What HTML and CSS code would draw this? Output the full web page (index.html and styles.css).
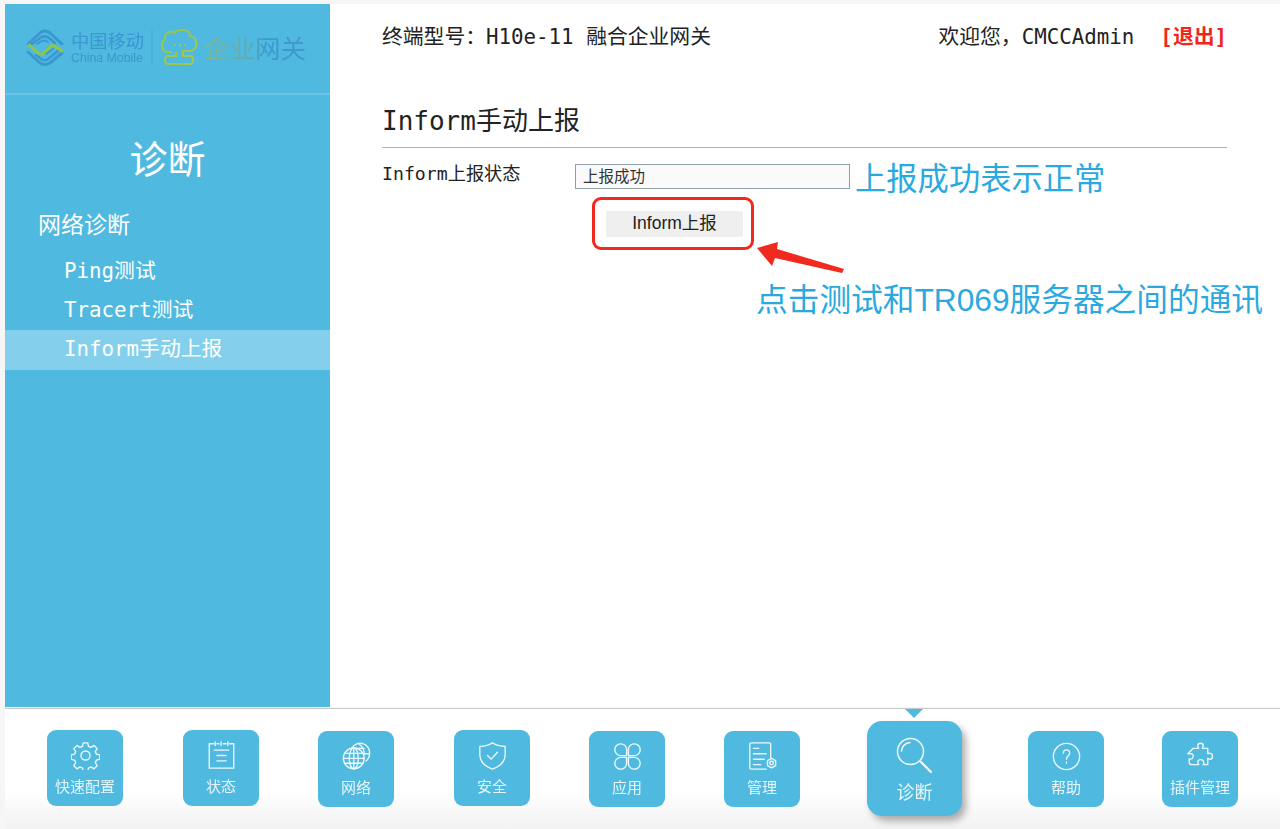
FILE: index.html
```html
<!DOCTYPE html>
<html lang="zh-CN">
<head>
<meta charset="utf-8">
<title>Inform手动上报</title>
<link rel="stylesheet" href="styles.css">
</head>
<body>
<div class="frame">
  <div class="upper">
    <aside class="sidebar">
      <div class="logo-row">
        <svg class="logo" width="325" height="91" viewBox="5 4 325 91">
          <defs>
            <linearGradient id="gw" x1="204" y1="0" x2="306" y2="0" gradientUnits="userSpaceOnUse">
              <stop offset="0" stop-color="#7dbb8c"/>
              <stop offset=".45" stop-color="#5fa9b4"/>
              <stop offset=".6" stop-color="#3f98d0"/>
              <stop offset="1" stop-color="#3f98d0"/>
            </linearGradient>
            <linearGradient id="cloud" x1="162" y1="30" x2="198" y2="65" gradientUnits="userSpaceOnUse">
              <stop offset="0" stop-color="#8dc45a"/>
              <stop offset="1" stop-color="#a8c843"/>
            </linearGradient>
          </defs>
          <g fill="none" stroke="#3a97d0" stroke-linecap="round" stroke-linejoin="round">
            <path d="M28 44 L40 33 Q45 29 50 33 L62 44" stroke-width="3"/>
            <path d="M32 44 L41 37.500 Q45 35 49 38 L55 43" stroke-width="2.500"/>
            <path d="M37 44 L42 41 Q45 39.500 48 42" stroke-width="2"/>
            <path d="M28 52 L40 63 Q45 66 50 63 L62 53" stroke-width="3"/>
            <path d="M36 55 L42 59.500 Q45 61 48 59 L58 51" stroke-width="2.500"/>
            <path d="M46 54 L53 49" stroke-width="2"/>
          </g>
          <path d="M29 45 L38 53 Q41 55.500 44 53 L50 47 Q53 44 56 47 L62 51" fill="none" stroke="#8fc549" stroke-width="3" stroke-linecap="round"/>
          <text class="logo-cn" x="71" y="47.500">中国移动</text>
          <text class="logo-en" x="71" y="61.500">China Mobile</text>
          <path d="M152 30 V65" stroke="#45a6d6" stroke-width="1"/>
          <path d="M172 52 H168 C161 52 160 42 165 40 C163 33 172 30 175 33 C178 28 190 29 190 36 C198 36 199 50 190 51 H183 V56 H190 C194 56 194 64 190 64 H168 C164 64 164 56 168 56 H176 V52" fill="none" stroke="url(#cloud)" stroke-width="2.200"/>
          <g fill="#a8c843"><circle cx="175" cy="45" r="1"/><circle cx="180" cy="45" r="1"/><circle cx="185" cy="45" r="1"/></g>
          <text class="logo-gw" x="204" y="58" fill="url(#gw)">企业网关</text>
        </svg>
      </div>
      <h1 class="side-title">诊断</h1>
      <nav class="side-nav">
        <div class="side-group">网络诊断</div>
        <a class="side-item">Ping测试</a>
        <a class="side-item">Tracert测试</a>
        <a class="side-item active">Inform手动上报</a>
      </nav>
    </aside>
    <main class="content">
      <header class="topbar">
        <div class="model">终端型号：H10e-11 融合企业网关</div>
        <div class="user"><span>欢迎您，CMCCAdmin</span><a class="logout">[退出]</a></div>
      </header>
      <h2 class="page-title">Inform手动上报</h2>
      <div class="form-row">
        <label class="form-label">Inform上报状态</label>
        <div class="status-box">上报成功</div>
      </div>
      <div class="button-row"><button class="inform-btn">Inform上报</button></div>
    </main>
  </div>
  <footer class="dock">
    <div class="dock-item up"><div class="tile">
      <svg class="ico" viewBox="0 0 32 32"><path d="M13.500 2h5l.8 3.800 2.900 1.200 3.200-2.100 3.500 3.500-2.100 3.200 1.200 2.900 3.800.8v5l-3.800.8-1.200 2.900 2.100 3.200-3.500 3.500-3.200-2.100-2.900 1.200-.8 3.800h-5l-.8-3.800-2.900-1.200-3.200 2.100-3.500-3.500 2.100-3.200-1.200-2.900-3.800-.8v-5l3.800-.8 1.200-2.900-2.100-3.200 3.500-3.500 3.200 2.100 2.900-1.200z"/><circle cx="16" cy="16" r="5"/></svg>
      <span class="lbl">快速配置</span></div></div>
    <div class="dock-item up"><div class="tile">
      <svg class="ico" viewBox="0 0 32 32"><path d="M7 3H2.500v27h27V3H25"/><path d="M11 3h2M18 3h3M9 1v4M15.500 1v4M23 1v4M8 10h16M11 16h10M11 22h10"/></svg>
      <span class="lbl">状态</span></div></div>
    <div class="dock-item"><div class="tile">
      <svg class="ico" viewBox="0 0 32 32"><circle cx="13" cy="18" r="11.500"/><ellipse cx="13" cy="18" rx="5" ry="11.500"/><path d="M13 6.500v23M1.500 18h23M3 12.500h20M3 23.500h20"/><path d="M11 6.500a10.500 10.500 0 0 1 19.500 6c0 3.500-1.500 6.500-4 8.500M19 2.500c3 2 5.500 6 5.500 11M24.500 7H14M30 13h-5.500"/></svg>
      <span class="lbl">网络</span></div></div>
    <div class="dock-item up"><div class="tile">
      <svg class="ico" viewBox="0 0 32 32"><path d="M16 2c4 3 9 4 14 4v9c0 8-6 13-14 16C8 28 2 23 2 15V6c5 0 10-1 14-4z"/><path d="M10.500 16l4 4 7-7.500"/></svg>
      <span class="lbl">安全</span></div></div>
    <div class="dock-item"><div class="tile">
      <svg class="ico" viewBox="0 0 32 32"><path d="M15 15H8a6.500 6.500 0 1 1 7-7zM17 15h7a6.500 6.500 0 1 0-7-7zM15 17H8a6.500 6.500 0 1 0 7 7zM17 17h7a6.500 6.500 0 1 1-7 7z"/></svg>
      <span class="lbl">应用</span></div></div>
    <div class="dock-item"><div class="tile">
      <svg class="ico" viewBox="0 0 32 32"><path d="M20 30H3.500a1.500 1.500 0 0 1-1.500-1.500v-26A1.500 1.500 0 0 1 3.500 1h20A1.500 1.500 0 0 1 25 2.500V17"/><path d="M6 7h6M6 13h14M6 19h12M6 25h8"/><path d="M26 18l4.500 2.500v5.500L26 28.500 21.500 26v-5.500z"/><circle cx="26" cy="23.300" r="2"/></svg>
      <span class="lbl">管理</span></div></div>
    <div class="dock-item current"><div class="tile">
      <svg class="ico" viewBox="0 0 36 36"><circle cx="14.500" cy="14.500" r="13"/><path d="M5.500 14a9 9 0 0 1 8.500-8.500"/><path d="M24.500 24.500L35 35" stroke-width="2.200"/></svg>
      <span class="lbl">诊断</span></div></div>
    <div class="dock-item"><div class="tile">
      <svg class="ico" viewBox="0 0 32 32"><circle cx="16" cy="16" r="14.500"/><path d="M12.500 12.500c0-5 7-5 7 0 0 3-3.500 3-3.500 6.500M16 22v1.500"/></svg>
      <span class="lbl">帮助</span></div></div>
    <div class="dock-item"><div class="tile">
      <svg class="ico" viewBox="0 0 32 32"><path d="M13 4c0-3.500 6-3.500 6 0 0 1-.5 2-1 3h6v6c1-.5 2-1 3-.5 3 .5 3 6 0 6.500-1 0-2-.5-3-1v7h-5c.5-1 1-2 .5-3-.5-3.500-6-3.500-6.500 0 0 1 .5 2 1 3H6.500c-2 0-3-1-3-3v-3.500c1 .5 2 .5 3 0 2-2 2-4 0-5.500H2L8 7h6c-.5-1-1-2-1-3z"/></svg>
      <span class="lbl">插件管理</span></div></div>
  </footer>
  <div class="note note-ok">上报成功表示正常</div>
  <div class="note note-tr">点击测试和TR069服务器之间的通讯</div>
  <div class="callout"></div>
  <svg class="arrow" width="92" height="40" viewBox="0 0 92 40"><path d="M0 6L21 0 20 7 87 27 85 31 18 16 15 24z" fill="#f12a20"/></svg>
</div>
</body>
</html>
```

FILE: styles.css
```css
* { box-sizing: border-box; }
html, body { margin: 0; height: 100%; overflow: hidden; }
body {
  background: #f6f6f6;
  font-family: "DejaVu Sans Mono", "Noto Sans CJK SC", monospace;
  color: #222;
}
.frame {
  position: relative;
  width: 1280px;
  height: 829px;
  padding: 4px 0 0 5px;
  display: flex;
  flex-direction: column;
}
.upper {
  display: flex;
  height: 703px;
  background: #fff;
}
.sidebar {
  width: 325px;
  flex: none;
  background: #50b9e0;
  color: #fff;
}
.logo-row {
  height: 91px;
  border-bottom: 2px solid #6cc5e6;
}
.logo { display: block; filter: blur(.5px); }
.logo-cn { font: 18.250px "Noto Sans CJK SC", sans-serif; fill: #3a97d0; }
.logo-en { font: 12.300px "Liberation Sans", sans-serif; fill: #3a97d0; }
.logo-gw { font: 25.500px "Noto Sans CJK SC", sans-serif; }
.side-title {
  margin: 0;
  padding-top: 34px;
  height: 104px;
  text-align: center;
  font: 400 38px/56px "Noto Sans CJK SC", sans-serif;
}
.side-nav { display: flex; flex-direction: column; }
.side-group {
  height: 53px;
  padding-left: 33px;
  font-size: 23px;
  line-height: 52px;
}
.side-item {
  height: 39px;
  padding-left: 59px;
  font-size: 20.800px;
  line-height: 39px;
  white-space: nowrap;
}
.side-item.active { background: #84d0ec; height: 40px; }
.content {
  flex: 1;
  padding: 0 53px 0 52px;
  min-width: 0;
}
.topbar {
  height: 64px;
  padding-top: 1px;
  display: flex;
  justify-content: space-between;
  font-size: 20.800px;
  line-height: 64px;
  white-space: nowrap;
}
.user { display: flex; gap: 26px; }
.logout { color: #f0261d; font-weight: 700; }
.page-title {
  margin: 0;
  height: 80px;
  padding-top: 34px;
  border-bottom: 1px solid #b4b4b4;
  font-size: 26px;
  font-weight: 400;
  line-height: 38px;
}
.form-row {
  display: flex;
  align-items: flex-start;
  margin-top: 16px;
}
.form-label {
  width: 193px;
  font-size: 18.200px;
  line-height: 20px;
}
.status-box {
  width: 275px;
  height: 25px;
  border: 1px solid #8fa0a8;
  background: #fafafa;
  padding-left: 7px;
  font: 15.500px/20px "Noto Sans CJK SC", sans-serif;
  color: #333;
}
.button-row { padding: 22px 0 0 224px; }
.inform-btn {
  width: 137px;
  height: 26px;
  border: 0;
  background: #efefef;
  padding: 0 0 2px;
  font: 17.500px/24px "Liberation Sans", "Noto Sans CJK SC", sans-serif;
  color: #222;
}
.dock {
  flex: 1;
  display: grid;
  grid-template-columns: 136px 135px 136px 135px 135px 143px 161px 134px 1fr;
  padding-left: 42px;
  border-top: 1px solid #c8c8c8;
  margin-top: 1px;
  background: linear-gradient(#fff 0, #fff 68%, #f2f2f2 100%);
}
.dock-item { padding-top: 22px; position: relative; }
.dock-item.up { padding-top: 21px; }
.tile {
  width: 76px;
  height: 76px;
  background: #50b9e0;
  border-radius: 9px;
  display: flex;
  flex-direction: column;
  align-items: center;
  color: #e6f6fb;
}
.ico {
  width: 29px;
  height: 29px;
  margin-top: 11px;
  fill: none;
  stroke: #eef9fc;
  stroke-width: 1.500;
  stroke-linecap: round;
  stroke-linejoin: round;
  filter: blur(.3px);
}
.lbl {
  margin-top: 5px;
  font: 15px/22px "Noto Sans CJK SC", sans-serif;
  white-space: nowrap;
  filter: blur(.3px);
}
.dock-item.current { padding: 12px 0 0; }
.current .tile {
  width: 95px;
  height: 95px;
  border-radius: 15px;
  box-shadow: 4px 5px 7px rgba(80, 80, 80, .45);
}
.current .ico { width: 36px; height: 36px; margin-top: 16px; margin-left: -1px; }
.current .lbl { margin-top: 7px; font-size: 18px; }
.current::before {
  content: "";
  position: absolute;
  left: 38px;
  top: 0;
  border: 9px solid transparent;
  border-top-color: #50b9e0;
  border-bottom: 0;
}
.note {
  position: absolute;
  color: #2aa9e0;
  font-family: "Noto Sans CJK SC", sans-serif;
  font-size: 31.300px;
  line-height: 40px;
  white-space: nowrap;
}
.note-ok { left: 855px; top: 157px; }
.note-tr { left: 756px; top: 280px; font-size: 31.700px; font-family: "Liberation Sans", "Noto Sans CJK SC", sans-serif; }
.callout {
  position: absolute;
  left: 592px;
  top: 197px;
  width: 162px;
  height: 53px;
  border: 3.500px solid #f12a20;
  border-radius: 9px;
}
.arrow { position: absolute; left: 757px; top: 242px; }
```
